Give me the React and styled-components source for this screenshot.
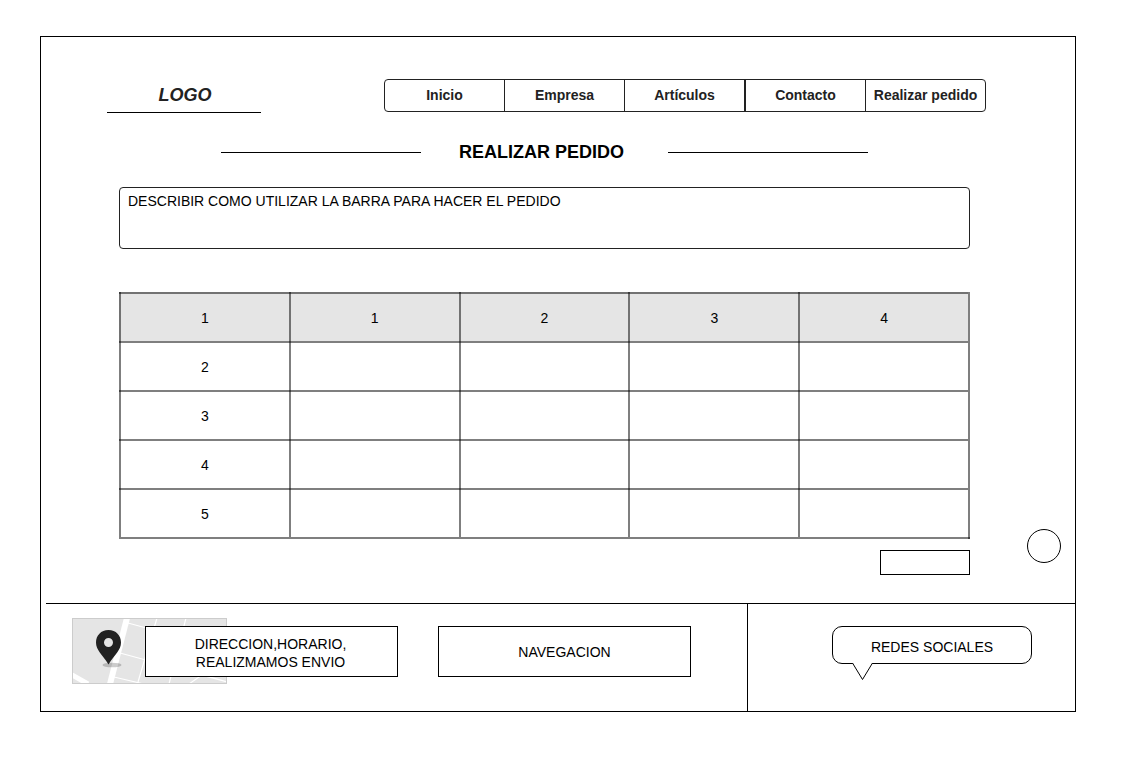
import React from "react";
import styled, { createGlobalStyle } from "styled-components";

const GlobalStyle = createGlobalStyle`
  *, *::before, *::after { box-sizing: border-box; }
  body {
    margin: 0;
    background: #fff;
    color: #000;
    font-family: "Liberation Sans", Arial, sans-serif;
    font-size: 14px;
    line-height: 18px;
  }
`;

const Frame = styled.div`
  margin: 36px 54px 72px 40px;
  border: 1px solid #000;
`;

const Header = styled.header`
  display: flex;
  justify-content: space-between;
  align-items: flex-start;
  padding: 42px 89px 0 66px;
`;

const Logo = styled.a`
  width: 154px;
  height: 34px;
  padding-left: 2px;
  border-bottom: 1px solid #000;
  color: #222;
  font-size: 18px;
  font-style: italic;
  font-weight: bold;
  line-height: 32px;
  text-align: center;
  text-decoration: none;
`;

const Nav = styled.nav`
  display: grid;
  grid-template-columns: 120fr 120fr 120fr 121fr 119fr;
  flex: 0 1 602px;
  border: 1px solid #222;
  border-radius: 4px;
`;

const NavLink = styled.a`
  border-right: 1px solid #222;
  border-left: ${(p) => (p.$double ? "1px solid #222" : "0")};
  color: #222;
  font-weight: bold;
  line-height: 31px;
  text-align: center;
  text-decoration: none;
  white-space: nowrap;
  &:last-child { border-right: 0; }
`;

const Body = styled.div`
  display: flex;
`;

const Content = styled.main`
  flex: 1;
  display: flex;
  flex-direction: column;
  padding: 29px 0 28px 78px;
`;

const TitleRow = styled.div`
  display: flex;
  align-items: center;
  justify-content: center;
  margin-bottom: 25px;
`;

const Rule = styled.span`
  width: 200px;
  height: 1px;
  background: #000;
`;

const Title = styled.h1`
  margin: 0 44px 0 38px;
  font-size: 18px;
  line-height: 20px;
`;

const Description = styled.p`
  min-height: 62px;
  margin: 0 0 43px;
  padding: 4px 8px;
  border: 1px solid #222;
  border-radius: 4px;
`;

const line = "linear-gradient(rgba(0, 0, 0, 0.5), rgba(0, 0, 0, 0.5))";

const Table = styled.table`
  width: 100%;
  table-layout: fixed;
  border-spacing: 0;
  padding: 0 2px 2px 0;
  background:
    ${line} right top / 2px 100% no-repeat,
    ${line} left bottom / 100% 2px no-repeat;
`;

const cell = `
  height: 49px;
  padding: 2px 0 0 2px;
  font-weight: normal;
  text-align: center;
  background:
    ${line} left top / 2px 100% no-repeat,
    ${line} left top / 100% 2px no-repeat;
`;

const HeadCell = styled.th`
  ${cell}
  background-color: #e5e5e5;
`;

const RowCell = styled.th`${cell}`;
const Cell = styled.td`${cell}`;

const Submit = styled.button`
  align-self: flex-end;
  width: 90px;
  height: 25px;
  margin-top: 11px;
  border: 1px solid #000;
  background: #fff;
`;

const Side = styled.aside`
  display: flex;
  align-items: flex-end;
  justify-content: flex-end;
  width: 105px;
  padding: 0 14px 40px 0;
`;

const RoundButton = styled.button`
  width: 34px;
  height: 34px;
  border: 1px solid #000;
  border-radius: 50%;
  background: #fff;
`;

const Footer = styled.footer`
  display: flex;
  min-height: 108px;
  margin-left: 5px;
  border-top: 1px solid #000;
`;

const FooterMain = styled.div`
  flex: 1;
  display: flex;
  align-items: flex-start;
  padding: 14px 0 0 26px;
`;

const Map = styled.svg`
  flex: none;
  width: 155px;
  height: 66px;
`;

const FooterBox = styled.div`
  position: relative;
  display: flex;
  align-items: center;
  justify-content: center;
  width: 253px;
  height: 51px;
  margin: ${(p) => (p.$overlap ? "8px 0 0 -82px" : "8px 0 0 40px")};
  padding: ${(p) => (p.$overlap ? "2px 2px 0 0" : "0")};
  border: 1px solid #000;
  background: #fff;
  text-align: center;
`;

const Social = styled.div`
  display: flex;
  align-items: flex-start;
  justify-content: flex-end;
  width: 328px;
  padding: 22px 43px 0 0;
  border-left: 1px solid #000;
`;

const Bubble = styled.div`
  position: relative;
  width: 200px;
  height: 38px;
  padding-top: 2px;
  border: 1px solid #000;
  border-radius: 10px;
  line-height: 36px;
  text-align: center;
`;

const Tail = styled.svg`
  position: absolute;
  top: 36px;
  left: 18px;
  width: 22px;
  height: 18px;
`;

const LINKS = ["Inicio", "Empresa", "Artículos", "Contacto", "Realizar pedido"];
const COLUMNS = ["1", "1", "2", "3", "4"];
const ROWS = ["2", "3", "4", "5"];

function LocationMap() {
  return (
    <Map viewBox="0 0 155 66" role="img" aria-label="Mapa">
      <rect x="0.5" y="0.5" width="154" height="65" fill="#e5e5e5" />
      <g stroke="#fff" fill="none">
        <path d="M55 0 L38 66" strokeWidth="6" />
        <path d="M0 57 L16 66" strokeWidth="5" />
        <path d="M56 5 L155 32 M48 35 L155 64 M42 59 L72 66 M85 0 L66 64 M114 0 L97 66 M117 66 L140 50 M128 56 L155 64" strokeWidth="1.2" />
      </g>
      <rect x="0.5" y="0.5" width="154" height="65" fill="none" stroke="#ccc" />
      <ellipse cx="40" cy="47" rx="9.5" ry="2.3" fill="#000" opacity="0.2" />
      <path fillRule="evenodd" fill="#222" d="M36.5 12 C29 12 24 17.5 24 24.5 C24 32 30 36 36.5 46.5 C43 36 49 32 49 24.5 C49 17.5 44 12 36.5 12 Z M36.5 20 A4.5 4.5 0 1 1 36.5 29 A4.5 4.5 0 1 1 36.5 20 Z" />
    </Map>
  );
}

export default function App() {
  return (
    <>
      <GlobalStyle />
      <Frame>
        <Header>
          <Logo href="#">LOGO</Logo>
          <Nav>
            {LINKS.map((label, i) => (
              <NavLink key={label} href="#" $double={i === 3}>{label}</NavLink>
            ))}
          </Nav>
        </Header>
        <Body>
          <Content>
            <TitleRow>
              <Rule />
              <Title>REALIZAR PEDIDO</Title>
              <Rule />
            </TitleRow>
            <Description>DESCRIBIR COMO UTILIZAR LA BARRA PARA HACER EL PEDIDO</Description>
            <Table>
              <thead>
                <tr>
                  {COLUMNS.map((c, i) => <HeadCell key={i} scope="col">{c}</HeadCell>)}
                </tr>
              </thead>
              <tbody>
                {ROWS.map((r) => (
                  <tr key={r}>
                    <RowCell scope="row">{r}</RowCell>
                    <Cell /><Cell /><Cell /><Cell />
                  </tr>
                ))}
              </tbody>
            </Table>
            <Submit type="button" aria-label="Enviar pedido" />
          </Content>
          <Side>
            <RoundButton type="button" aria-label="Ayuda" />
          </Side>
        </Body>
        <Footer>
          <FooterMain>
            <LocationMap />
            <FooterBox $overlap>DIRECCION,HORARIO,<br />REALIZMAMOS ENVIO</FooterBox>
            <FooterBox>NAVEGACION</FooterBox>
          </FooterMain>
          <Social>
            <Bubble>
              REDES SOCIALES
              <Tail viewBox="0 0 22 18" aria-hidden="true">
                <path d="M1.5 0 L11.5 16.5 L21.5 0" fill="#fff" stroke="#000" />
              </Tail>
            </Bubble>
          </Social>
        </Footer>
      </Frame>
    </>
  );
}
